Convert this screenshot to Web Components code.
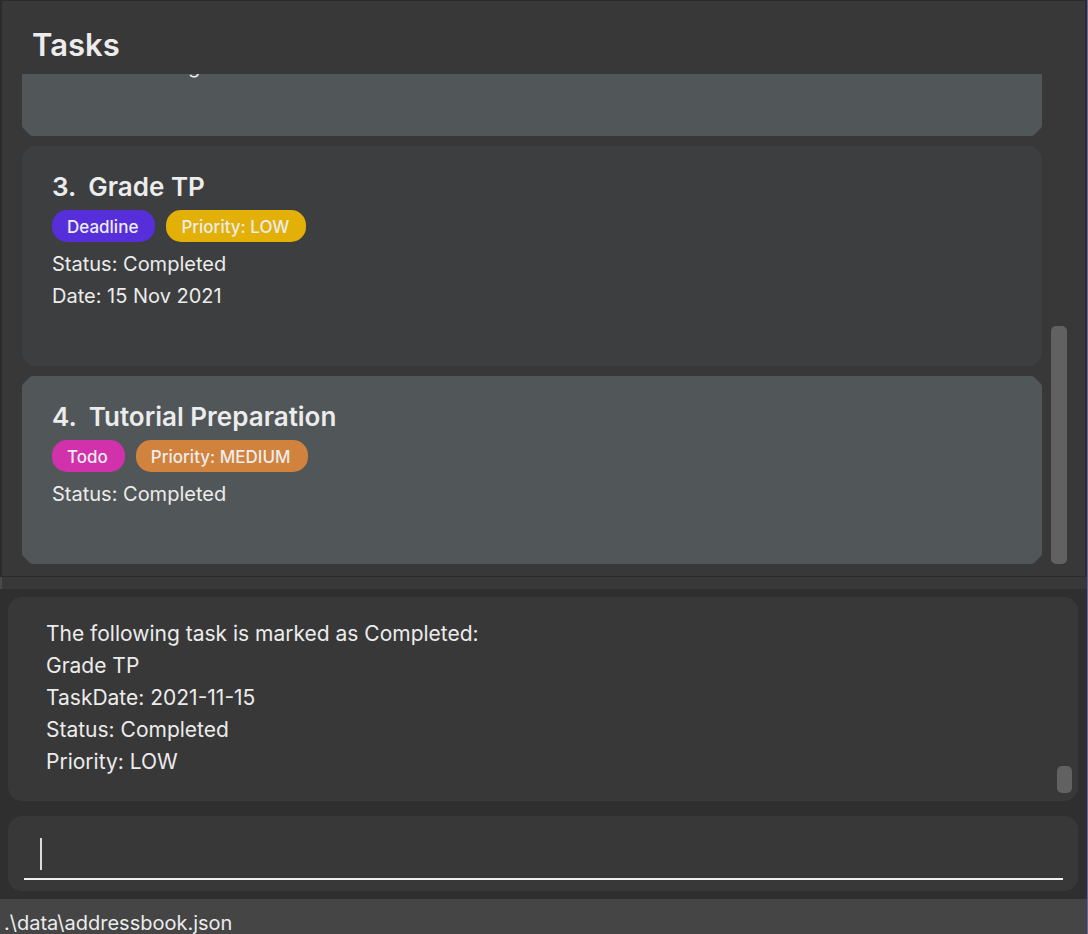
<!DOCTYPE html>
<html lang="en">
<head>
<meta charset="utf-8">
<meta name="viewport" content="width=device-width, initial-scale=1">
<title>Tasks</title>
<style>
  html, body { margin: 0; height: 100%; }
  body {
    --panel: #383838;
    --backdrop: #2f2f2f;
    --edge: #2b2b2b;
    --thumb: #616161;
    --text: #ececec;
    font-family: Inter, "Liberation Sans", sans-serif;
    color: var(--text);
    background: var(--backdrop);
    overflow: hidden;
  }
</style>
</head>
<body>
<task-window>
  <task-panel slot="tasks" heading="Tasks">
    <task-card alt>
      <task-line>Status: Pending</task-line>
    </task-card>
    <task-card number="3." name="Grade TP">
      <task-tag slot="tags" kind="deadline">Deadline</task-tag>
      <task-tag slot="tags" kind="low">Priority: LOW</task-tag>
      <task-line>Status: Completed</task-line>
      <task-line>Date: 15 Nov 2021</task-line>
    </task-card>
    <task-card alt number="4." name="Tutorial Preparation">
      <task-tag slot="tags" kind="todo">Todo</task-tag>
      <task-tag slot="tags" kind="medium">Priority: MEDIUM</task-tag>
      <task-line>Status: Completed</task-line>
    </task-card>
  </task-panel>
  <result-box slot="console">
    <task-line>The following task is marked as Completed:</task-line>
    <task-line>Grade TP</task-line>
    <task-line>TaskDate: 2021-11-15</task-line>
    <task-line>Status: Completed</task-line>
    <task-line>Priority: LOW</task-line>
  </result-box>
  <command-box slot="console"></command-box>
  <status-footer slot="footer">.\data\addressbook.json</status-footer>
</task-window>

<script>
  function define(name, html, setup) {
    const template = document.createElement('template');
    template.innerHTML = html;
    customElements.define(name, class extends HTMLElement {
      constructor() {
        super();
        this.attachShadow({ mode: 'open' }).append(template.content.cloneNode(true));
        if (setup) setup(this, this.shadowRoot);
      }
    });
  }

  define('task-window', `
    <style>
      :host { display: flex; flex-direction: column; height: 100vh; box-sizing: border-box; border-right: 1px solid #6f63a8; }
      .tasks { flex: 1; min-height: 0; display: flex; }
      .divider { height: 12px; background: var(--panel); border-left: 2px solid #4a4a4a; }
      .console { display: flex; flex-direction: column; gap: 15px; padding: 8px 9px 8px 8px; }
    </style>
    <main class="tasks"><slot name="tasks"></slot></main>
    <div class="divider"></div>
    <section class="console"><slot name="console"></slot></section>
    <slot name="footer"></slot>`);

  define('task-panel', `
    <style>
      :host { flex: 1; min-width: 0; display: flex; flex-direction: column; box-sizing: border-box; background: var(--panel);
        border: solid var(--edge); border-width: 1px 2px 1px 2px; padding: 0 18px 12px 20px; }
      h1 { margin: 0; padding: 24px 0 9px 10px; font-size: 31px; line-height: 40px; font-weight: 600; }
      .view { flex: 1; min-height: 0; display: flex; gap: 9px; }
      .list { flex: 1; min-width: 0; display: flex; flex-direction: column; justify-content: flex-end; gap: 10px; overflow: hidden; }
      .track { display: grid; grid-template-rows: 18fr 17fr; width: 16px; }
      .thumb { grid-row: 2; border-radius: 5px; background: var(--thumb); }
    </style>
    <h1></h1>
    <div class="view">
      <div class="list"><slot></slot></div>
      <div class="track"><div class="thumb"></div></div>
    </div>`, (host, root) => {
      root.querySelector('h1').textContent = host.getAttribute('heading');
    });

  define('task-card', `
    <style>
      :host { flex: none; display: flex; flex-direction: column; padding: 24px 30px 54px; background: #3c3e3f; border-radius: 12px; font-size: 20px;
        clip-path: polygon(9px 0, calc(100% - 9px) 0, 100% 9px, 100% calc(100% - 9px), calc(100% - 9px) 100%, 9px 100%, 0 calc(100% - 9px), 0 9px); }
      :host([alt]) { background: #515658; }
      h2 { display: flex; gap: 12px; margin: 0 0 6px; font-size: 26px; line-height: 34px; font-weight: 600; }
      .tags { display: flex; gap: 11px; margin-bottom: 6px; }
    </style>
    <h2><span class="number"></span><span class="name"></span></h2>
    <div class="tags"><slot name="tags"></slot></div>
    <slot></slot>`, (host, root) => {
      if (!host.hasAttribute('name')) {
        root.querySelector('h2').remove();
        return;
      }
      root.querySelector('.number').textContent = host.getAttribute('number');
      root.querySelector('.name').textContent = host.getAttribute('name');
    });

  define('task-tag', `
    <style>
      :host { display: block; box-sizing: border-box; height: 32px; padding: 1px 17px 0 15px; border-radius: 15px; font-size: 17px; line-height: 32px; font-weight: 500; white-space: nowrap; }
      :host([kind="deadline"]) { background: #562fdb; }
      :host([kind="todo"]) { background: #d131ab; }
      :host([kind="low"]) { background: #e2b007; }
      :host([kind="medium"]) { background: #d1823d; }
    </style>
    <slot></slot>`);

  define('task-line', `
    <style>
      :host { display: block; line-height: 32px; white-space: nowrap; }
    </style>
    <slot></slot>`);

  define('result-box', `
    <style>
      :host { display: flex; gap: 6px; padding: 21px 6px 8px 38px; background: var(--panel); border-radius: 14px; font-size: 21px; }
      .text { flex: 1; min-width: 0; padding-bottom: 15px; }
      .track { display: flex; flex-direction: column; justify-content: flex-end; width: 15px; }
      .thumb { height: 27px; border-radius: 5px; background: var(--thumb); }
    </style>
    <div class="text"><slot></slot></div>
    <div class="track"><div class="thumb"></div></div>`);

  define('command-box', `
    <style>
      :host { display: block; padding: 14px 15px 11px 16px; background: var(--panel); border-radius: 14px; }
      label { display: flex; align-items: center; height: 48px; border-bottom: 2px solid #f0f0f0; padding-left: 16px; }
      .caret { width: 2px; height: 32px; background: #dcdcdc; }
      input { flex: 1; min-width: 0; height: 40px; padding: 0; border: 0; outline: 0; background: none; color: inherit; font: inherit; font-size: 21px; }
    </style>
    <label><span class="caret"></span><input type="text" aria-label="Command"></label>`);

  define('status-footer', `
    <style>
      :host { display: block; box-sizing: border-box; height: 35px; padding: 8px 4px 0; background: #454545; font-size: 20px; line-height: 32px; white-space: nowrap; overflow: hidden; }
    </style>
    <slot></slot>`);
</script>
</body>
</html>
